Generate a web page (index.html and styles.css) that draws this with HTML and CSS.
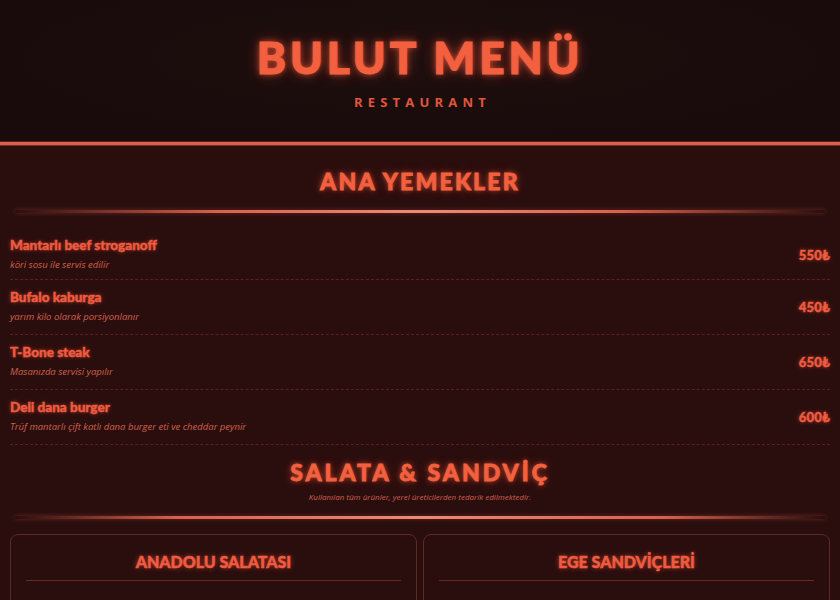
FILE: index.html
```html
<!DOCTYPE html>
<html lang="tr">
<head>
<meta charset="utf-8">
<link rel="stylesheet" href="styles.css">
</head>
<body>
<header class="hero">
  <h1 class="hero-title">BULUT MENÜ</h1>
  <p class="hero-sub">RESTAURANT</p>
</header>
<main class="menu">
  <section class="section">
    <h2 class="section-title">ANA YEMEKLER</h2>
    <div class="divider"></div>
    <ul class="items">
      <li class="item">
        <div class="item-text">
          <div class="item-name">Mantarlı beef stroganoff</div>
          <div class="item-desc">köri sosu ile servis edilir</div>
        </div>
        <div class="item-price">550₺</div>
      </li>
      <li class="item">
        <div class="item-text">
          <div class="item-name">Bufalo kaburga</div>
          <div class="item-desc">yarım kilo olarak porsiyonlanır</div>
        </div>
        <div class="item-price">450₺</div>
      </li>
      <li class="item">
        <div class="item-text">
          <div class="item-name">T-Bone steak</div>
          <div class="item-desc">Masanızda servisi yapılır</div>
        </div>
        <div class="item-price">650₺</div>
      </li>
      <li class="item">
        <div class="item-text">
          <div class="item-name">Deli dana burger</div>
          <div class="item-desc">Trüf mantarlı çift katlı dana burger eti ve cheddar peynir</div>
        </div>
        <div class="item-price">600₺</div>
      </li>
    </ul>
  </section>
  <section class="section">
    <h2 class="section-title section-title-2">SALATA &amp; SANDVİÇ</h2>
    <p class="section-note">Kullanılan tüm ürünler, yerel üreticilerden tedarik edilmektedir.</p>
    <div class="divider divider-2"></div>
    <div class="cards">
      <div class="card">
        <h3 class="card-title">ANADOLU SALATASI</h3>
        <div class="card-line"></div>
      </div>
      <div class="card">
        <h3 class="card-title">EGE SANDVİÇLERİ</h3>
        <div class="card-line"></div>
      </div>
    </div>
  </section>
</main>
</body>
</html>
```
FILE: styles.css
```css
* { box-sizing: border-box; }
html, body { margin: 0; padding: 0; }
body {
  background: #2a0e0e;
  font-family: "Open Sans", "DejaVu Sans", sans-serif;
  color: #ef5b40;
  overflow: hidden;
  height: 600px;
}
.hero {
  height: 145px;
  background: radial-gradient(ellipse at 50% 40%, #1f0f0f 0%, #190b0b 70%);
  border-bottom: 3px solid #d9604c;
  box-shadow: 0 1px 0 #7a2a20, inset 0 -1px 0 #5a1e18;
  display: flex;
  flex-direction: column;
  align-items: center;
  padding-top: 31px;
}
.hero-title {
  margin: 0;
  font-family: "Lato", sans-serif;
  font-weight: 900;
  font-size: 44px;
  line-height: 52px;
  letter-spacing: 4px;
  color: #f2603f;
  -webkit-text-stroke: 1.2px #f2603f;
  text-shadow: 0 0 6px rgba(255, 95, 60, 0.75), 0 0 14px rgba(255, 80, 50, 0.45);
}
.hero-sub {
  margin: 10px 0 0;
  font-family: "Open Sans", sans-serif;
  font-weight: 700;
  font-size: 13px;
  letter-spacing: 5.2px;
  color: #e0553c;
  padding-left: 5px;
}
.menu { padding: 0 10px; }
.section { display: flex; flex-direction: column; }
.section-title {
  margin: 21px 0 0;
  text-align: center;
  font-family: "Lato", sans-serif;
  font-weight: 900;
  font-size: 23px;
  line-height: 30px;
  letter-spacing: 2.2px;
  color: #f2603f;
  -webkit-text-stroke: 0.8px #f2603f;
  text-shadow: 0 0 5px rgba(255, 95, 60, 0.7), 0 0 12px rgba(255, 80, 50, 0.35);
}
.divider {
  margin: 14px 5px 0;
  height: 3px;
  background: linear-gradient(90deg, rgba(217,96,76,0) 0%, #d9604c 25%, #ec8a76 50%, #d9604c 75%, rgba(217,96,76,0) 100%);
  box-shadow: 0 0 4px rgba(220, 90, 70, 0.4);
}
.items { list-style: none; margin: 18px 0 0; padding: 0; }
.item {
  display: flex;
  justify-content: space-between;
  align-items: center;
  height: 55px;
  border-bottom: 1px dashed #5a2218;
  padding-bottom: 3px;
}
.item:first-child { height: 49px; }
.item-name {
  font-family: "Lato", sans-serif;
  font-weight: 900;
  font-size: 13.5px;
  line-height: 16px;
  color: #ef5b40;
  -webkit-text-stroke: 0.4px #ef5b40;
  text-shadow: 0 0 4px rgba(255, 90, 60, 0.6);
}
.item-desc {
  margin-top: 5px;
  font-family: "Open Sans", sans-serif;
  font-style: italic;
  font-size: 9.5px;
  line-height: 13px;
  color: #d2604c;
}
.item-price {
  font-family: "Lato", sans-serif;
  font-weight: 900;
  font-size: 13px;
  letter-spacing: 0.3px;
  color: #ef5b40;
  -webkit-text-stroke: 0.4px #ef5b40;
  text-shadow: 0 0 4px rgba(255, 90, 60, 0.6);
  margin-top: 2px;
}
.section-title-2 { margin-top: 12px; letter-spacing: 3px; }
.section-note {
  margin: 4px 0 0;
  text-align: center;
  font-family: "Open Sans", sans-serif;
  font-style: italic;
  font-size: 8px;
  color: #d2604c;
}
.divider-2 { margin-top: 14px; background: linear-gradient(90deg, rgba(217,96,76,0) 0%, #d9604c 20%, #ec8a76 50%, #d9604c 80%, rgba(217,96,76,0) 100%); }
.cards {
  display: grid;
  grid-template-columns: 1fr 1fr;
  gap: 6px;
  margin-top: 15px;
}
.card {
  border: 1px solid #5c2a22;
  border-radius: 8px;
  padding: 0 15px;
  height: 120px;
  background: #2a0e0e;
}
.card-title {
  margin: 17px 0 0;
  text-align: center;
  font-family: "Lato", sans-serif;
  font-weight: 900;
  font-size: 16px;
  line-height: 20px;
  color: #ef5b40;
  -webkit-text-stroke: 0.5px #ef5b40;
  text-shadow: 0 0 5px rgba(255, 90, 60, 0.65);
}
.card-line {
  margin-top: 8px;
  height: 1px;
  background: #6a2a22;
}
```
